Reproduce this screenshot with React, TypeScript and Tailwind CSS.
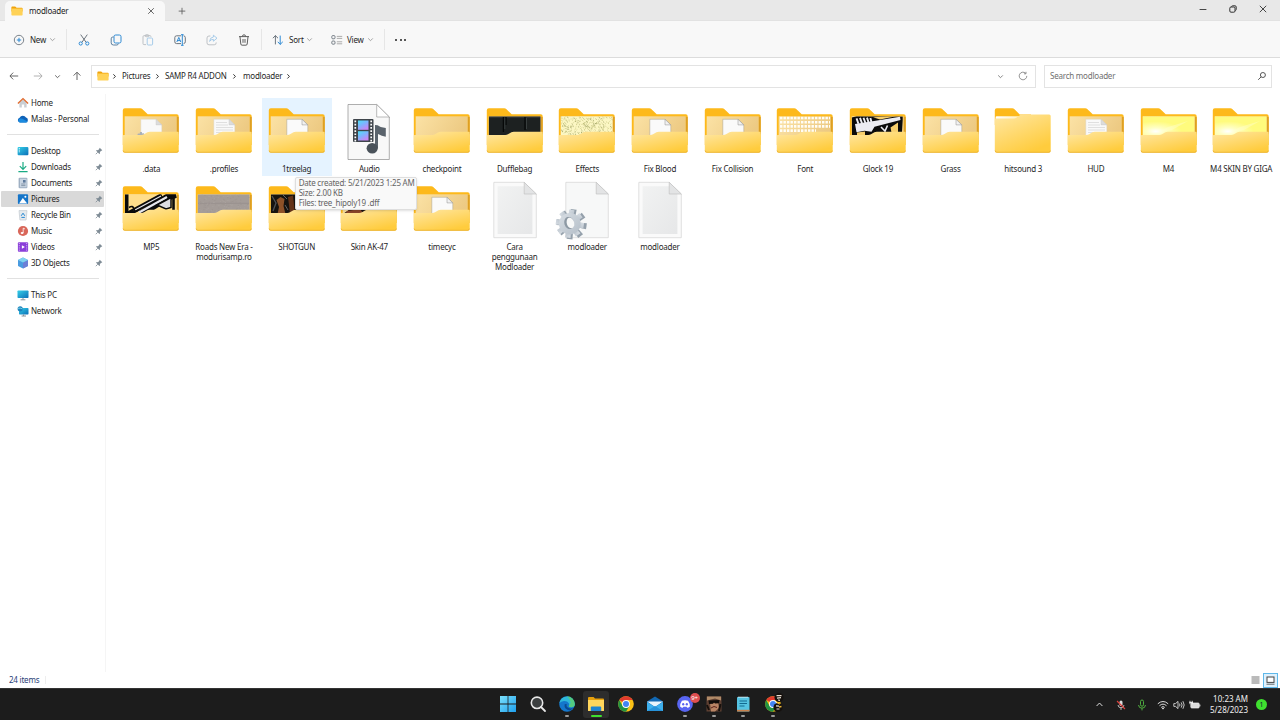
import type { ReactNode } from "react";
import clsx from "clsx";

type Preview =
  | "doc"
  | "lines"
  | "data"
  | "none"
  | "closed"
  | "bag"
  | "effects"
  | "font"
  | "glock"
  | "mp5"
  | "road"
  | "shotgun"
  | "ak"
  | "yellow";

type Item = {
  lines: string[];
  kind: "folder" | "audio" | "text" | "ini";
  preview?: Preview;
  hover?: boolean;
};

const ITEMS: Item[] = [
  { lines: [".data"], kind: "folder", preview: "data" },
  { lines: [".profiles"], kind: "folder", preview: "lines" },
  { lines: ["1treelag"], kind: "folder", preview: "doc", hover: true },
  { lines: ["Audio"], kind: "audio" },
  { lines: ["checkpoint"], kind: "folder", preview: "none" },
  { lines: ["Dufflebag"], kind: "folder", preview: "bag" },
  { lines: ["Effects"], kind: "folder", preview: "effects" },
  { lines: ["Fix Blood"], kind: "folder", preview: "doc" },
  { lines: ["Fix Collision"], kind: "folder", preview: "doc" },
  { lines: ["Font"], kind: "folder", preview: "font" },
  { lines: ["Glock 19"], kind: "folder", preview: "glock" },
  { lines: ["Grass"], kind: "folder", preview: "doc" },
  { lines: ["hitsound 3"], kind: "folder", preview: "closed" },
  { lines: ["HUD"], kind: "folder", preview: "lines" },
  { lines: ["M4"], kind: "folder", preview: "yellow" },
  { lines: ["M4 SKIN BY GIGA"], kind: "folder", preview: "yellow" },
  { lines: ["MP5"], kind: "folder", preview: "mp5" },
  { lines: ["Roads New Era -", "modurisamp.ro"], kind: "folder", preview: "road" },
  { lines: ["SHOTGUN"], kind: "folder", preview: "shotgun" },
  { lines: ["Skin AK-47"], kind: "folder", preview: "ak" },
  { lines: ["timecyc"], kind: "folder", preview: "doc" },
  { lines: ["Cara", "penggunaan", "Modloader"], kind: "text" },
  { lines: ["modloader"], kind: "ini" },
  { lines: ["modloader"], kind: "text" },
];

// fixed pseudo-random specks, so every render draws the same texture
const SPECKS = Array.from({ length: 300 }, (_, i) => {
  const a = Math.abs(Math.sin(i * 12.9898) * 43758.5453) % 1;
  const b = Math.abs(Math.sin(i * 78.233) * 12543.123) % 1;
  return { x: 5.8 + a * 51, y: 16.4 + b * 19, d: i % 4 };
});

function SharedDefs() {
  return (
    <svg width="0" height="0" className="absolute" aria-hidden="true">
      <defs>
        <linearGradient id="front" x1="0" y1="0" x2="0.6" y2="1">
          <stop offset="0" stopColor="#ffe7a4" />
          <stop offset="1" stopColor="#ffcc3d" />
        </linearGradient>
        <linearGradient id="inner" x1="0" y1="0" x2="1" y2="0.3">
          <stop offset="0" stopColor="#fbe2a5" />
          <stop offset="1" stopColor="#edca83" />
        </linearGradient>
        <linearGradient id="shine" x1="0" y1="0" x2="1" y2="0">
          <stop offset="0" stopColor="#ffffff" />
          <stop offset="1" stopColor="#ffeebb" />
        </linearGradient>
        <linearGradient id="paper" x1="0" y1="0" x2="1" y2="1">
          <stop offset="0" stopColor="#f1f2f2" />
          <stop offset="1" stopColor="#e6e7e8" />
        </linearGradient>
        <linearGradient id="film" x1="0" y1="0" x2="0.6" y2="1">
          <stop offset="0" stopColor="#4fe0f5" />
          <stop offset="0.5" stopColor="#7db4ff" />
          <stop offset="1" stopColor="#c886f5" />
        </linearGradient>
        <linearGradient id="gear" x1="0" y1="0" x2="1" y2="1">
          <stop offset="0" stopColor="#d8dee4" />
          <stop offset="1" stopColor="#b4bec8" />
        </linearGradient>
        <radialGradient id="glow" cx="0.25" cy="0.75" r="0.5">
          <stop offset="0" stopColor="#ffffff" />
          <stop offset="0.35" stopColor="#ffffc4" />
          <stop offset="1" stopColor="#fffb7d" />
        </radialGradient>
        <linearGradient id="screen" x1="0" y1="0" x2="1" y2="1">
          <stop offset="0" stopColor="#35d0e8" />
          <stop offset="1" stopColor="#0b6fb8" />
        </linearGradient>
        <linearGradient id="win" x1="0" y1="0" x2="1" y2="1">
          <stop offset="0" stopColor="#7be0fb" />
          <stop offset="1" stopColor="#1ea0ee" />
        </linearGradient>
        <clipPath id="photo">
          <rect x="5.7" y="16.3" width="52" height="20" />
        </clipPath>
      </defs>
    </svg>
  );
}

function FolderPreview({ type }: { type: Preview }) {
  switch (type) {
    case "doc":
      return (
        <g>
          <path d="M21.8 19.3H37l5.8 5.6V38H21.8Z" fill="#fafafa" stroke="#a9a08c" strokeWidth="0.5" />
          <path d="M37 19.3v5.6h5.8Z" fill="#f1f1f1" stroke="#8f8f8f" strokeWidth="0.5" />
        </g>
      );
    case "lines":
    case "data":
      return (
        <g>
          <path d="M21.8 19.3H37l5.8 5.6V38H21.8Z" fill="#f9f9f9" stroke="#d9d2c2" strokeWidth="0.4" />
          <path d="M37 19.3v5.6h5.8Z" fill="#dcdcdc" stroke="#c4c4c4" strokeWidth="0.4" />
          {type === "lines" && (
            <path d="M24 22.5h11M24 25h12M24 27.5h17M24 30h17M24 32.5h9" stroke="#d4d4d4" strokeWidth="0.7" />
          )}
          {type === "data" && (
            <path d="M18 36l1-2.600 1.600.3.400-1.600h1.800l.5 1.400 1.500-.3.8 1.600 1.200.8Z" fill="#a9b0b8" />
          )}
        </g>
      );
    case "bag":
      return (
        <g>
          <rect x="5.7" y="16.3" width="52" height="20" fill="#1d2121" />
          <path d="M6 17.6h51" stroke="#343a3a" strokeWidth="0.8" />
          <path d="M20.4 17v15M23 17v8M42 17v13" stroke="#060808" strokeWidth="1.3" />
          <path d="M21.8 18v11M43.5 18v11" stroke="#4b5252" strokeWidth="0.6" />
        </g>
      );
    case "effects":
      return (
        <g>
          <rect x="5.7" y="16.3" width="52" height="20" fill="#fcf7c4" />
          {SPECKS.map((s, i) => (
            <path
              key={i}
              d={s.d % 2 ? "M0 0l1.2 .8" : "M0 .8L1 0"}
              transform={`translate(${s.x} ${s.y})`}
              stroke={s.d === 3 ? "#8b9050" : "#c5c37e"}
              strokeWidth="0.6"
            />
          ))}
        </g>
      );
    case "font":
      return (
        <path
          d="M7 18h50M7 22.2h50M7 26.4h50M7 30.6h36"
          stroke="#fffdf5"
          strokeWidth="2.6"
          strokeDasharray="2.4 1.1"
        />
      );
    case "glock":
      return (
        <g>
          <path d="M5.7 17.5l5-1.2 46 .2v3l-1 17H6Z" fill="#0b0b0b" />
          <path d="M27 17.200l19-.9h4l-16 3.200Z" fill="#f7cf6d" />
          <path d="M9 24l19-3 26-4.300.5 3.200-26 6.800-3 5-7-1-8 1.600Z" fill="#ececf2" />
          <path d="M10.500 18.400l2 5.500M14 17.900l2 5.500M17.500 17.700l2 5.500M21 17.600l1.600 5M24.400 18l1 4" stroke="#ececf2" strokeWidth="1.900" />
          <path d="M35 27l4 4 2.500-5.500" stroke="#ececf2" strokeWidth="1.600" fill="none" />
          <path d="M44.500 27.500l7.500-5v13h-6Z" fill="#f7cf6d" />
          <path d="M11 32.500l8-1v4h-8Z" fill="#f7cf6d" />
        </g>
      );
    case "mp5":
      return (
        <g>
          <rect x="5.7" y="16.3" width="52" height="20" fill="#ffde8c" />
          <path d="M7.7 16.3v20" stroke="#0a0a0a" strokeWidth="3.6" />
          <path d="M9 36l34-18.5" stroke="#0a0a0a" strokeWidth="5" />
          <path d="M22 36L48 19.5l9-3" stroke="#0a0a0a" strokeWidth="7" />
          <path d="M20 34.500L48 19" stroke="#e6e6eb" strokeWidth="2.200" />
          <path d="M15 32.500L42 18" stroke="#e6e6eb" strokeWidth="1.200" />
          <path d="M38 27l14-7.5v10L47 31Z" fill="#dcdce2" stroke="#0a0a0a" strokeWidth="1.5" />
          <path d="M10 29.5q4-2.5 5 1.5t4 1" stroke="#0a0a0a" strokeWidth="1.6" fill="none" />
          <path d="M54.5 17v16" stroke="#0a0a0a" strokeWidth="2.6" />
        </g>
      );
    case "road":
      return (
        <g>
          <rect x="5.7" y="16.3" width="52" height="20" fill="#a49c98" />
          <path d="M6 25.3h51" stroke="#8e8682" strokeWidth="0.5" />
          {SPECKS.filter((s) => s.d > 1).map((s, i) => (
            <rect key={i} x={s.x} y={s.y} width="1.2" height="0.7" fill={s.d === 2 ? "#aba4a0" : "#9c9490"} />
          ))}
        </g>
      );
    case "shotgun":
      return (
        <g>
          <rect x="5.7" y="16.3" width="52" height="20" fill="#15130f" />
          <path d="M11.5 22l4-3 4 2-1 7 2 8h-8l1.5-7Z" fill="#8d5228" />
          <path d="M23 19l5-1.5 2 18h-5Z" fill="#633318" />
          <path d="M7 18l4 7-3 8" stroke="#4d5156" strokeWidth="1.3" fill="none" />
          <path d="M18 17l4 4M20 27l3 5" stroke="#6b6d70" strokeWidth="0.9" />
        </g>
      );
    case "ak":
      return (
        <g>
          <path d="M6 36l10-7 41-3v10Z" fill="#1a1210" />
          <path d="M10 33l13-2 3 4H9Z" fill="#8a452a" />
          <path d="M32 30l10-1 3 4" stroke="#a35a3a" strokeWidth="1.4" fill="none" />
        </g>
      );
    case "yellow":
      return (
        <g>
          <rect x="5.7" y="16.3" width="52" height="20" fill="url(#glow)" />
          <path d="M22 32l9-5 20-6-16 9Z" fill="#ffffd8" opacity="0.4" />
        </g>
      );
    default:
      return null;
  }
}

function FolderIcon({ preview }: { preview: Preview }) {
  if (preview === "closed") {
    return (
      <svg width="64" height="64" viewBox="0 0 64 64">
        <path d="M3.8 10.3q0-2 2-2h15.4q1.4 0 2.3 1l5.2 5.2H40V25H3.8Z" fill="#fdb91b" />
        <path d="M4.600 17.200q0-1 1-1H29l-5 3H4.600Z" fill="url(#shine)" />
        <path
          d="M3.8 19.9q0-1.400 1.400-1.400H23q1.600 0 2.700-.9l3.200-2.400q.8-.6 2-.6h27.300q1.500 0 1.500 1.500v34.700q0 1.900-1.900 1.900H5.700q-1.900 0-1.900-1.900Z"
          fill="url(#front)"
        />
        <path d="M4.2 50.6q0 1.7 1.7 1.7h51.8q1.7 0 1.7-1.7" fill="none" stroke="#e7aa2a" strokeWidth="0.7" />
      </svg>
    );
  }
  return (
    <svg width="64" height="64" viewBox="0 0 64 64">
      <path d="M3.8 10.3q0-2 2-2h15.4q1.4 0 2.3 1l5.2 5h29q2 0 2 2V45H3.8Z" fill="#fdb91b" />
      <path d="M57.7 17v18l2-1V17Z" fill="#dd9f24" />
      <rect x="5.7" y="16.3" width="52" height="24" fill="url(#inner)" />
      <g clipPath="url(#photo)">
        <FolderPreview type={preview} />
      </g>
      <path
        d="M3.8 36q0-1 1-1h17.500q1.5 0 2.700-.8l3.4-1.9q1-.6 2.400-.6h27.900q1 0 1 1v18.200q0 1.800-1.9 1.800H5.700q-1.900 0-1.900-1.800Z"
        fill="url(#front)"
      />
      <path d="M4.2 50.6q0 1.7 1.7 1.7h51.8q1.7 0 1.7-1.7" fill="none" stroke="#e7aa2a" strokeWidth="0.7" />
    </svg>
  );
}

function TextFileIcon() {
  return (
    <svg width="64" height="64" viewBox="0 0 64 64">
      <path d="M10.8 4.3h30.4L53.3 16v43.7H10.8Z" fill="#fafafa" stroke="#cccccc" strokeWidth="0.6" />
      <path d="M14.6 8.3h26.6V16h8.2v40H14.6Z" fill="url(#paper)" />
      <path d="M41.2 4.3V16h12.1Z" fill="#e3e4e5" stroke="#bcbcbc" strokeWidth="0.6" />
    </svg>
  );
}

function IniFileIcon() {
  return (
    <svg width="64" height="64" viewBox="0 0 64 64" className="overflow-visible">
      <path d="M10.8 4.3h30.4L53.3 16v43.7H10.8Z" fill="#f7f8f8" stroke="#cccccc" strokeWidth="0.6" />
      <path d="M41.2 4.3V16h12.1Z" fill="#e3e4e5" stroke="#bcbcbc" strokeWidth="0.6" />
      <g transform="translate(1.6 1.2)">
        <g fill="#94a0ab">
          {[0, 45, 90, 135, 180, 225, 270, 315].map((a) => (
            <path key={a} d="M12 30h6l-.5 7h-5Z" transform={`rotate(${a + 8} 15 45)`} />
          ))}
        </g>
        <g fill="url(#gear)">
          {[0, 45, 90, 135, 180, 225, 270, 315].map((a) => (
            <path key={a} d="M10.500 30.500h5.500l-.5 7h-4.500Z" transform={`rotate(${a + 8} 13.200 44.500)`} />
          ))}
          <circle cx="13.2" cy="44.5" r="10.8" />
        </g>
        <ellipse cx="12.6" cy="43.8" rx="4.9" ry="6.2" fill="#8d99a4" transform="rotate(-18 12.6 43.8)" />
        <ellipse cx="13.9" cy="43.8" rx="3.7" ry="5.4" fill="#f7f8f8" transform="rotate(-18 13.9 43.8)" />
      </g>
    </svg>
  );
}

function AudioFileIcon() {
  return (
    <svg width="64" height="64" viewBox="0 0 64 64">
      <path d="M11 4.5h28.7L52.3 17v42.5H11Z" fill="#f8f8f8" stroke="#8d8d8d" strokeWidth="0.7" />
      <path d="M39.7 4.5V17h12.6Z" fill="#fff" stroke="#8d8d8d" strokeWidth="0.6" />
      <rect x="16" y="19" width="20.5" height="23" rx="1" fill="#3f454b" />
      <rect x="21" y="20.5" width="10.5" height="9.3" fill="url(#film)" />
      <rect x="21" y="31.2" width="10.5" height="9.3" fill="url(#film)" />
      <path d="M18.3 20.6v21M34.2 20.6v21" stroke="#fff" strokeWidth="1.7" strokeDasharray="1.7 1.5" />
      <path d="M38 25l2.6.2q3 2.6 8.2 2.9v8.6q-4-.2-7.8-2.6V48H38Z" fill="#5a636c" />
      <ellipse cx="35.2" cy="48.2" rx="5.6" ry="5.3" fill="#4a525a" />
    </svg>
  );
}

function ItemIcon({ item }: { item: Item }) {
  if (item.kind === "audio") return <AudioFileIcon />;
  if (item.kind === "text") return <TextFileIcon />;
  if (item.kind === "ini") return <IniFileIcon />;
  return <FolderIcon preview={item.preview ?? "none"} />;
}

function MiniFolder({ className }: { className?: string }) {
  return (
    <svg width="12" height="10" viewBox="0 0 12 10" className={className}>
      <path d="M.4 1.3q0-.8.8-.8h3l1.4 1.2h5.2q.8 0 .8.8v3H.4Z" fill="#f0a30a" />
      <rect x=".4" y="2.5" width="11.2" height="7" rx=".7" fill="#ffd257" />
    </svg>
  );
}

function Chevron({ dir = "down", className }: { dir?: "down" | "right" | "up"; className?: string }) {
  const d = { down: "M1.2 2.4l2.300 2.300L5.800 2.400", right: "M2.4 1.300l2 2.100-2 2.100", up: "M.6 5L3.5 2 6.4 5" }[dir];
  return (
    <svg width="7" height="7" viewBox="0 0 7 7" fill="none" stroke="currentColor" strokeWidth="0.9" className={clsx("shrink-0", className)}>
      <path d={d} />
    </svg>
  );
}

function TitleBar() {
  return (
    <div className="flex h-[21px] shrink-0 items-end border-b border-[#e2e2e2] bg-[#e8e8e8]">
      <div className="-mb-px ml-[5px] flex h-5 w-[160px] items-center rounded-t-[5px] bg-[#f8f8f8] pr-[10px] pl-[6px]">
        <MiniFolder />
        <span className="ml-[6px] text-[#1b1b1b]">modloader</span>
        <svg width="8" height="8" viewBox="0 0 8 8" stroke="#444" strokeWidth="0.8" className="ml-auto">
          <path d="M1.2 1.2l5.6 5.6M6.8 1.2L1.2 6.8" />
        </svg>
      </div>
      <svg width="8" height="8" viewBox="0 0 8 8" stroke="#555" strokeWidth="0.8" className="mb-[5px] ml-[13px]">
        <path d="M4 .8v6.6M.7 4.1h6.6" />
      </svg>
      <div className="mb-[7px] ml-auto flex items-center gap-[22px] pr-[13px]">
        <svg width="8" height="8" viewBox="0 0 8 8" stroke="#333" strokeWidth="0.9">
          <path d="M.6 4.5h6.8" />
        </svg>
        <svg width="8" height="8" viewBox="0 0 8 8" stroke="#333" fill="none" strokeWidth="1">
          <rect x=".8" y="2" width="5.2" height="5.2" rx="1.2" />
          <path d="M2.4 1.6q.3-.8 1.2-.8H6q1.2 0 1.2 1.2v2.4q0 .9-.8 1.2" />
        </svg>
        <svg width="8" height="8" viewBox="0 0 8 8" stroke="#333" strokeWidth="0.9">
          <path d="M.8.8l6.4 6.4M7.2.8L.8 7.2" />
        </svg>
      </div>
    </div>
  );
}

function ToolIcon({ children, dim }: { children: ReactNode; dim?: boolean }) {
  return (
    <div className={clsx("flex w-8 justify-center", dim && "opacity-40")}>
      <svg width="12" height="12" viewBox="0 0 12 12" fill="none" strokeWidth="0.9">
        {children}
      </svg>
    </div>
  );
}

function Divider() {
  return <div className="h-[21px] w-px bg-[#e6e6e6]" />;
}

function Toolbar() {
  return (
    <div className="flex h-[37px] shrink-0 items-center border-b border-[#dcdcdc] bg-[#f8f8f8] pt-px text-[#1f1f1f]">
      <div className="flex w-[66px] items-center pl-[13px]">
        <svg width="12" height="12" viewBox="0 0 12 12" fill="none">
          <circle cx="6" cy="6" r="4.7" stroke="#5c6670" strokeWidth="0.8" />
          <path d="M6 3.8v4.4M3.8 6h4.4" stroke="#1a7fd0" strokeWidth="0.9" />
        </svg>
        <span className="ml-[5px] w-[19px]">New</span>
        <Chevron className="text-[#999]" />
      </div>
      <Divider />
      <div className="flex pr-px pl-px">
        <ToolIcon>
          <path d="M2.7.6L8 8.2M9.3.6L4 8.2" stroke="#5c6670" />
          <circle cx="2.7" cy="9.5" r="1.6" stroke="#1a7fd0" />
          <circle cx="9.3" cy="9.5" r="1.6" stroke="#1a7fd0" />
        </ToolIcon>
        <ToolIcon>
          <rect x="4" y="1" width="7" height="8" rx="1.6" stroke="#1a7fd0" />
          <path d="M3.6 3H2.8Q1.2 3 1.2 4.8v4Q1.2 11 3.4 11h3.4q1.3 0 1.6-1.4" stroke="#4d7394" />
        </ToolIcon>
        <ToolIcon dim>
          <path d="M4 10.6H2q-1 0-1-1V2.7q0-1 1-1h6q1 0 1 1" stroke="#5c6670" />
          <rect x="3.2" y=".7" width="3.6" height="2" rx="1" stroke="#5c6670" />
          <rect x="5.2" y="4" width="5.4" height="7" rx="1" stroke="#1a7fd0" />
        </ToolIcon>
        <ToolIcon>
          <path d="M7 1.8H2.6Q.8 1.8.8 3.6v4.2q0 1.8 1.8 1.8H7M9.6 1.8q1.7.2 1.7 1.8v4.2q0 1.6-1.7 1.8" stroke="#5c6670" />
          <path d="M8.3.7v10.6M7 .7h2.6M7 11.3h2.6M2.8 8l2-4.6 2 4.6M3.5 6.6h2.6" stroke="#1a7fd0" />
        </ToolIcon>
        <ToolIcon dim>
          <path d="M4.4 2H3Q1 2 1 4v4.8q0 2 2 2h5.2q2 0 2-2V8.4" stroke="#5c6670" />
          <path d="M7.4 1.2l3.6 3-3.6 3V5.4Q5 5.2 3.6 7.4 4 3.2 7.4 3Z" stroke="#1a7fd0" />
        </ToolIcon>
        <ToolIcon>
          <path d="M1 2.6h10M4.4 2.4q0-1.6 1.6-1.6t1.6 1.6M2 2.8l.8 7.2q.1 1.2 1.3 1.2h3.8q1.2 0 1.3-1.2L10 2.8M5 5v3.8M7 5v3.8" stroke="#4e4e4e" />
        </ToolIcon>
      </div>
      <Divider />
      <div className="flex w-[60px] items-center pl-[10px]">
        <svg width="12" height="12" viewBox="0 0 12 12" fill="none" strokeWidth="0.9">
          <path d="M3.4 10.4V1.6M.9 4.2l2.5-2.6L6 4.2" stroke="#5c6670" />
          <path d="M8.2 1.6v8.8M5.8 7.8l2.4 2.6 2.6-2.6" stroke="#1a7fd0" />
        </svg>
        <span className="ml-[5px] w-[17px]">Sort</span>
        <Chevron className="text-[#999]" />
      </div>
      <div className="flex w-[62px] items-center pl-[9px]">
        <svg width="12" height="12" viewBox="0 0 12 12" fill="none" stroke="#5c6670" strokeWidth="0.8">
          <rect x=".8" y="1.6" width="3.2" height="3.2" rx="1" />
          <rect x=".8" y="7" width="3.2" height="3.2" rx="1" />
          <path d="M5.8 2.4h5.4M5.8 4.4h5.4M5.8 7.8h5.4M5.8 9.8h5.4" stroke="#777" strokeWidth="0.6" />
        </svg>
        <span className="ml-1 w-5">View</span>
        <Chevron className="text-[#999]" />
      </div>
      <Divider />
      <div className="ml-[10px] flex gap-[2.5px]">
        <i className="size-[2px] rounded-full bg-[#222]" />
        <i className="size-[2px] rounded-full bg-[#222]" />
        <i className="size-[2px] rounded-full bg-[#222]" />
      </div>
    </div>
  );
}

function AddressRow() {
  return (
    <div className="flex h-[36px] shrink-0 items-center bg-white text-[#1f1f1f]">
      <div className="flex w-[91px] items-center pl-[8px] text-[#555]">
        <svg width="12" height="10" viewBox="0 0 12 10" fill="none" stroke="#555" strokeWidth="0.9">
          <path d="M10.2 5H2M5.2 1.6L1.9 5l3.3 3.4" />
        </svg>
        <svg width="12" height="10" viewBox="0 0 12 10" fill="none" stroke="#a9a9a9" strokeWidth="0.9" className="ml-[12px]">
          <path d="M1.8 5H10M6.8 1.6L10.1 5 6.8 8.4" />
        </svg>
        <Chevron className="ml-[10px]" />
        <svg width="10" height="10" viewBox="0 0 10 10" fill="none" stroke="#555" strokeWidth="0.9" className="ml-[11px]">
          <path d="M5 9V1.4M1.6 4.6L5 1.2l3.4 3.4" />
        </svg>
      </div>
      <div className="flex h-[23px] w-[945px] items-center border border-[#e3e3e3] pr-[7px] pl-[5px]">
        <MiniFolder />
        <Chevron dir="right" className="ml-[2px]" />
        <span className="ml-[4px] w-[30px]">Pictures</span>
        <Chevron dir="right" className="ml-[2px]" />
        <span className="ml-[4px] w-[64px] whitespace-nowrap">SAMP R4 ADDON</span>
        <Chevron dir="right" className="ml-[2px]" />
        <span className="ml-[5px] w-[40px]">modloader</span>
        <Chevron dir="right" className="ml-[2px]" />
        <Chevron className="ml-auto text-[#777]" />
        <svg width="10" height="10" viewBox="0 0 10 10" fill="none" stroke="#777" strokeWidth="0.8" className="ml-[14px]">
          <path d="M8.8 4.9A3.8 3.8 0 1 1 7.6 2.2M8 .8v2H6" />
        </svg>
      </div>
      <div className="ml-2 flex h-[23px] w-[228px] items-center justify-between border border-[#e3e3e3] pr-[4px] pl-[5px] text-[#707070]">
        <span>Search modloader</span>
        <svg width="10" height="10" viewBox="0 0 10 10" fill="none" stroke="#444" strokeWidth="0.9">
          <circle cx="5.9" cy="4" r="2.5" />
          <path d="M4.1 5.9L1.2 8.8" />
        </svg>
      </div>
    </div>
  );
}

const SIDE_ICONS: Record<string, ReactNode> = {
  home: (
    <>
      <path d="M2.4 5.6L6 2.2l3.6 3.4v5H7.2V7.4H4.8v3.2H2.4Z" fill="#c9ced3" />
      <path d="M.9 6.5L6 1.6l5.1 4.9" fill="none" stroke="#e0692c" strokeWidth="1.3" />
    </>
  ),
  cloud: (
    <>
      <path d="M3 9.4a2.4 2.4 0 0 1-.4-4.7A3.6 3.6 0 0 1 9 4.6a2.5 2.5 0 0 1 .2 4.8Z" fill="#0f62b8" />
      <path d="M2.6 9.4a2 2 0 0 1 .4-3.8q2-.4 3.4.6l4.4 2.6q-.5.6-1.6.6Z" fill="#1b8be0" />
    </>
  ),
  desktop: (
    <>
      <rect x=".6" y="2" width="10.8" height="8.2" rx="1" fill="url(#screen)" />
      <path d="M1.8 3.6h1M1.8 5.2h1M1.8 6.8h1" stroke="#fff" strokeWidth="0.9" />
    </>
  ),
  downloads: (
    <path d="M6 1v7M2.8 5.2L6 8.4l3.2-3.2M1.4 10.6h9.2" fill="none" stroke="#1aab84" strokeWidth="1.2" />
  ),
  documents: (
    <>
      <rect x="1.6" y=".8" width="8.8" height="10.4" rx="1" fill="#9fb0c3" />
      <rect x="3" y="1.8" width="6.6" height="8.4" fill="#c9d5e2" />
      <path d="M4.2 7h4.2M4.2 8.6h4.2" stroke="#6c7f95" strokeWidth="0.7" />
      <rect x="6" y="3" width="2.6" height="2.6" fill="#5d7a9c" />
    </>
  ),
  pictures: (
    <>
      <rect x=".9" y="1.2" width="10.2" height="9.8" rx="1" fill="#1575c9" />
      <path d="M2 10.6L5.8 5l4.4 5.6Z" fill="#fff" />
      <circle cx="8.4" cy="3.8" r="1" fill="#fff" />
    </>
  ),
  recycle: (
    <>
      <path d="M2 1.6h8l-.9 9.4H2.9Z" fill="#e5eaee" stroke="#b8c1c9" strokeWidth="0.6" />
      <path d="M4.2 6.8L6 4.2l1.8 2.6M4.4 8.4h3.4" fill="none" stroke="#2487d2" strokeWidth="1" />
    </>
  ),
  music: (
    <>
      <circle cx="6" cy="6" r="5.1" fill="#d9675a" />
      <ellipse cx="5.1" cy="8" rx="1.4" ry="1.1" fill="#fff" />
      <path d="M6.2 8V3.2l1.8.8" stroke="#fff" strokeWidth="0.8" fill="none" />
    </>
  ),
  videos: (
    <>
      <rect x=".9" y="1.2" width="10.2" height="9.6" rx="1" fill="#8a3fd9" />
      <path d="M2.3 2v8.4M9.7 2v8.4" stroke="#d4b3f5" strokeWidth="1" strokeDasharray="1.1 1.1" />
      <path d="M4.9 4.2v3.6L7.9 6Z" fill="#fff" />
    </>
  ),
  objects: (
    <>
      <path d="M6 .6l5 2.4v6L6 11.4 1 9V3Z" fill="#4a9be0" />
      <path d="M6 5.4L11 3v6l-5 2.4Z" fill="#6c7fd6" />
      <path d="M6 .6l5 2.4-5 2.4L1 3Z" fill="#7fd3f0" />
    </>
  ),
  pc: (
    <>
      <rect x=".5" y="1.6" width="11" height="7.4" rx=".7" fill="url(#screen)" />
      <path d="M6 9v1.6M3.6 10.8h4.8" stroke="#7a8791" strokeWidth="0.9" />
    </>
  ),
  network: (
    <>
      <rect x="2" y="3" width="9.5" height="6.4" rx=".7" fill="url(#screen)" />
      <path d="M6.6 9.4V11M4.6 11h4.4" stroke="#7a8791" strokeWidth="0.9" />
      <circle cx="3.2" cy="3.8" r="2.6" fill="#1d84bd" />
      <path d="M1 3.4q2-.8 4.4.4" stroke="#8be0ef" strokeWidth="0.8" fill="none" />
    </>
  ),
};

const QUICK = [
  ["desktop", "Desktop"],
  ["downloads", "Downloads"],
  ["documents", "Documents"],
  ["pictures", "Pictures"],
  ["recycle", "Recycle Bin"],
  ["music", "Music"],
  ["videos", "Videos"],
  ["objects", "3D Objects"],
];

function SideRow({ icon, label, pinned, active }: { icon: string; label: string; pinned?: boolean; active?: boolean }) {
  return (
    <div className={clsx("ml-[1px] flex h-4 w-[103px] items-center pl-[15.5px]", active && "rounded-[1px] bg-[#d9d9d9]")}>
      <svg width="12" height="12" viewBox="0 0 12 12">
        {SIDE_ICONS[icon]}
      </svg>
      <span className="ml-[2.5px] whitespace-nowrap">{label}</span>
      {pinned && (
        <svg width="8" height="8" viewBox="0 0 8 8" className="mr-[1.5px] ml-auto">
          <path d="M4.7.7l2.6 2.6-.7.5-.3-.1-1.4 1.4.1 1.3-.6.6L1.1 3.7l.6-.6 1.3.1 1.4-1.4-.1-.4Z" fill="#7f8c96" />
          <path d="M2.8 5.2L.8 7.2" stroke="#7f8c96" strokeWidth="0.8" />
        </svg>
      )}
    </div>
  );
}

function Sidebar() {
  return (
    <div className="w-[106px] shrink-0 border-r border-[#f5f5f5] pt-[0.5px] text-[#1f1f1f]">
      <SideRow icon="home" label="Home" />
      <SideRow icon="cloud" label="Malas - Personal" />
      <div className="mt-[7.5px] mb-[7.5px] ml-[7px] h-px w-[92px] bg-[#e1e1e1]" />
      {QUICK.map(([icon, label]) => (
        <SideRow key={label} icon={icon} label={label} pinned active={label === "Pictures"} />
      ))}
      <div className="mt-[7.5px] mb-[7.5px] ml-[7px] h-px w-[92px] bg-[#e1e1e1]" />
      <SideRow icon="pc" label="This PC" />
      <SideRow icon="network" label="Network" />
    </div>
  );
}

function Files() {
  return (
    <div className="grid auto-rows-[78px] grid-cols-[repeat(16,72.66px)] content-start pt-[4px] pl-[9px] text-[#1f1f1f]">
      {ITEMS.map((item, i) => (
        <div
          key={i}
          className={clsx(
            "relative flex h-[78px] w-[70px] flex-col items-center justify-self-center",
            item.hover && "z-10 bg-[#e5f3ff]"
          )}
        >
          <div className="mt-[2px] h-16 w-16 shrink-0">
            <ItemIcon item={item} />
          </div>
          <div className="text-center leading-[10px] whitespace-nowrap">
            {item.lines.map((line) => (
              <div key={line}>{line}</div>
            ))}
          </div>
          {item.hover && (
            <div className="absolute top-[79px] left-[33px] h-[33px] w-[122px] rounded-[2px] border border-[#dedede] bg-[#f9f9f9] pl-[3px] leading-[10px] whitespace-nowrap text-[#646464] shadow-sm">
              <div>Date created: 5/21/2023 1:25 AM</div>
              <div>Size: 2.00 KB</div>
              <div>Files: tree_hipoly19 .dff</div>
            </div>
          )}
        </div>
      ))}
    </div>
  );
}

function StatusBar() {
  return (
    <div className="flex h-4 shrink-0 items-center justify-between bg-white pl-[9px] text-[#1f3d77]">
      <div className="flex items-center gap-[6px]">
        <span>24 items</span>
        <i className="h-[8px] w-px bg-[#eee]" />
      </div>
      <div className="flex items-center gap-[3px] pr-[2px]">
        <svg width="9" height="9" viewBox="0 0 9 9" stroke="#777" strokeWidth="1">
          <path d="M.5 1h8M.5 3h8M.5 5h8M.5 7h8" />
        </svg>
        <div className="flex h-[15px] w-[15px] items-center justify-center border border-[#5fb8ea] bg-[#dff1fc]">
          <svg width="9" height="9" viewBox="0 0 9 9">
            <rect x="1" y="1" width="7" height="5.4" fill="#fff" stroke="#444" />
            <path d="M.5 8.2h8" stroke="#666" />
          </svg>
        </div>
      </div>
    </div>
  );
}

function ChromeLogo() {
  return (
    <>
      <circle cx="8" cy="8" r="7.8" fill="#fbc116" />
      <path d="M8 8L1.25 4.1A7.8 7.8 0 0 1 14.75 4.1H8Z" fill="#e33b2e" />
      <path d="M1.25 4.1A7.8 7.8 0 0 0 8 15.8L11.4 9.9 8 8 4.6 9.9Z" fill="#229342" />
      <circle cx="8" cy="8" r="3.9" fill="#fff" />
      <circle cx="8" cy="8" r="3" fill="#4285f4" />
    </>
  );
}

const TASKS: { name: string; mark?: "open" | "active"; art: ReactNode }[] = [
  {
    name: "Start",
    art: <path d="M0 0h7.6v7.6H0ZM8.4 0H16v7.6H8.4ZM0 8.4h7.6V16H0ZM8.4 8.4H16V16H8.4Z" fill="url(#win)" />,
  },
  {
    name: "Search",
    art: (
      <>
        <circle cx="7" cy="6.8" r="5.7" fill="#3c3f40" stroke="#e8e8e8" strokeWidth="1.6" />
        <path d="M11 11l4 4" stroke="#e8e8e8" strokeWidth="1.8" strokeLinecap="round" />
      </>
    ),
  },
  {
    name: "Edge",
    mark: "open",
    art: (
      <>
        <circle cx="8" cy="8" r="7.8" fill="#1477cc" />
        <path d="M.3 7.2A7.8 7.8 0 0 1 15.8 8q0 3.2-3.6 3.2-2.7 0-2.5-1.3.9-1 .1-2.6Q8.3 4.8 5 5 1.8 5.200.3 7.2Z" fill="#2fb8d9" />
        <path d="M8 .2A7.8 7.8 0 0 1 15.8 8q0 3.2-3.6 3.2-2.7 0-2.5-1.3Q14 6 8 .2Z" fill="#5bd06a" opacity="0.8" />
        <path d="M5.6 8.2q-.8 5.2 5.4 6.2 2-.7 3.4-2.6-3.8 1.4-6-.5-1.4-1.300-.7-3.400Z" fill="#0b4a92" />
      </>
    ),
  },
  {
    name: "Explorer",
    mark: "active",
    art: (
      <>
        <path d="M0 2q0-1 1-1h4.6L7 2.6h8q1 0 1 1V6H0Z" fill="#e5a00d" />
        <path d="M0 4h16v10.4q0 .6-.6.6H.6q-.6 0-.6-.6Z" fill="#ffd65c" />
        <path d="M2.8 15v-3.6q0-.9.9-.9h8.6q.9 0 .9.9V15Z" fill="#1f84d0" />
      </>
    ),
  },
  { name: "Chrome", art: <ChromeLogo /> },
  {
    name: "Mail",
    art: (
      <>
        <path d="M0 5.5L8 .6l8 4.9V15H0Z" fill="#1268b3" />
        <path d="M0 5.6h16L8 11Z" fill="#e9f4fc" />
        <path d="M0 6l8 5 8-5v9H0Z" fill="#3db0ee" />
        <path d="M0 15l8-5 8 5Z" fill="#2792d9" />
      </>
    ),
  },
  {
    name: "Discord",
    mark: "open",
    art: (
      <>
        <circle cx="8" cy="8" r="7.9" fill="#5865f2" />
        <path d="M4.9 4.8Q8 3.8 11.1 4.8q1.8 2.7 1.8 5.6-1.2 1.1-2.7 1.3l-.6-1H6.4l-.6 1q-1.5-.2-2.7-1.3 0-2.9 1.8-5.6Z" fill="#fff" />
        <ellipse cx="6.2" cy="8.3" rx="1.1" ry="1.3" fill="#5865f2" />
        <ellipse cx="9.8" cy="8.3" rx="1.1" ry="1.3" fill="#5865f2" />
      </>
    ),
  },
  {
    name: "Game",
    mark: "open",
    art: (
      <>
        <rect x=".5" y=".5" width="15" height="15" fill="#5e4032" />
        <path d="M1 .5h14v4l-6-2-8 2Z" fill="#b08a68" />
        <path d="M4 7l8-1 1 6-4 3.5H5Z" fill="#b88464" />
        <path d="M2.5 4.5l11-.5-.5 3.2-4 .3-1-1-1 1.3-4 .2Z" fill="#100c0a" />
        <path d="M5 12l3-1.5 3 1" stroke="#5d2219" strokeWidth="1" fill="none" />
        <path d="M1 9l2 5M14.5 8L13 15" stroke="#17100c" strokeWidth="2" />
      </>
    ),
  },
  {
    name: "Notepad",
    mark: "open",
    art: (
      <>
        <rect x="2" y="1" width="12.5" height="14.5" rx=".8" fill="#55c3e2" />
        <path d="M2 13.8h12.5v1.7H2Z" fill="#c8814d" />
        <path d="M4.5 5h7.5M4.5 7.5h7.5M4.5 10h5" stroke="#126a91" strokeWidth="1" />
        <path d="M3.5 1.3h10" stroke="#e8f7fb" strokeWidth="1.5" strokeDasharray="1 1" />
      </>
    ),
  },
  {
    name: "Chrome profile",
    mark: "open",
    art: (
      <>
        <ChromeLogo />
        <circle cx="14" cy="1.5" r="4.5" fill="#15110e" />
        <circle cx="13" cy="11.5" r="4.6" fill="#15110e" />
        <path d="M11.5-.3h5M12 2.2l4-.5M13 4l2 .3M11 9.8l3 .3M11.5 13h3" stroke="#e9dfd2" strokeWidth="1.2" />
        <path d="M12.5 7.2l2.5.8M14 11l2.5-.5" stroke="#e7b53b" strokeWidth="1.3" />
      </>
    ),
  },
];

function Taskbar() {
  return (
    <div className="flex h-8 shrink-0 items-center border-t border-[#333] bg-[#1c1c1c]">
      <div className="ml-[493.5px] flex">
        {TASKS.map((t) => (
          <div key={t.name} className="flex w-[29.4px] justify-center">
            <div
              className={clsx(
                "relative flex h-[27px] w-[26px] flex-col items-center rounded-[3px] pt-[5px]",
                t.mark === "active" && "bg-[#2d2d2d]"
              )}
            >
              <svg width="16" height="16" viewBox="0 0 16 16" className="overflow-visible">
                {t.art}
              </svg>
              {t.mark === "open" && <i className="mt-[3px] h-[2px] w-1 rounded-full bg-[#9a9a9a]" />}
              {t.mark === "active" && <i className="mt-[3px] h-[2px] w-[11px] rounded-full bg-[#3fe02f]" />}
              {t.name === "Discord" && (
                <span className="absolute top-[2px] -right-[2px] flex h-[10px] w-[10px] items-center justify-center rounded-full bg-[#e04f50] text-[6px] leading-none text-white">
                  9+
                </span>
              )}
            </div>
          </div>
        ))}
      </div>
      <div className="ml-auto flex items-center pr-[13px] text-[#f0f0f0]">
        <Chevron dir="up" />
        <svg width="10" height="12" viewBox="0 0 10 12" fill="none" className="ml-[13px]">
          <rect x="3.5" y="1.5" width="3" height="5.5" rx="1.5" fill="#ddd" />
          <path d="M2 6q.3 2.8 3 2.8T8 6M5 8.8V11" stroke="#ddd" strokeWidth="0.8" />
          <path d="M1 2l8 8" stroke="#e0413c" strokeWidth="1.1" />
        </svg>
        <svg width="10" height="12" viewBox="0 0 10 12" fill="none" stroke="#4fae3f" strokeWidth="1" className="ml-[11.5px]">
          <rect x="3.5" y="1" width="3" height="6.2" rx="1.5" />
          <path d="M1.5 6q.3 3.2 3.5 3.2T8.500 6M5 9.2v2.200" />
        </svg>
        <svg width="12" height="10" viewBox="0 0 12 10" fill="none" stroke="#eee" strokeWidth="0.9" className="ml-[10px]">
          <path d="M.8 3.8q5.2-4.6 10.4 0M2.5 5.7q3.5-3.2 7 0M4.2 7.4q1.8-1.6 3.6 0" />
          <circle cx="6" cy="8.5" r=".5" fill="#eee" />
        </svg>
        <svg width="12" height="10" viewBox="0 0 12 10" fill="none" stroke="#eee" strokeWidth="0.8" className="ml-1">
          <path d="M.8 3.6h1.7L5 1.4v7.2L2.5 6.4H.8ZM6.5 3.6q.9 1.4 0 2.8M8.2 2.4q1.8 2.6 0 5.2M9.9 1.2q2.6 3.8 0 7.6" />
        </svg>
        <svg width="12" height="10" viewBox="0 0 12 10" fill="none" className="ml-1">
          <rect x="1.8" y="3" width="8.4" height="5" rx="1" fill="#ddd" stroke="#eee" strokeWidth="0.7" />
          <path d="M10.9 4.6v1.8" stroke="#eee" strokeWidth="0.9" />
          <path d="M1 .8v3.4M3.2.8v3.4M.4 2.6h3.4" stroke="#fff" strokeWidth="0.9" />
        </svg>
        <div className="w-[47px] text-right leading-[10.5px] tracking-normal whitespace-nowrap">
          <div>10:23 AM</div>
          <div>5/28/2023</div>
        </div>
        <span className="ml-[8px] flex h-[11px] w-[11px] items-center justify-center rounded-full bg-[#3fe02f] text-[7px] text-[#123]">
          1
        </span>
      </div>
    </div>
  );
}

export default function App() {
  return (
    <div className="flex h-[720px] w-[1280px] flex-col overflow-hidden bg-white font-['Noto_Sans','Open_Sans',sans-serif] text-[8px] leading-[10px] tracking-[-0.22px]">
      <SharedDefs />
      <TitleBar />
      <Toolbar />
      <AddressRow />
      <div className="flex min-h-0 flex-1">
        <Sidebar />
        <Files />
      </div>
      <StatusBar />
      <Taskbar />
    </div>
  );
}
